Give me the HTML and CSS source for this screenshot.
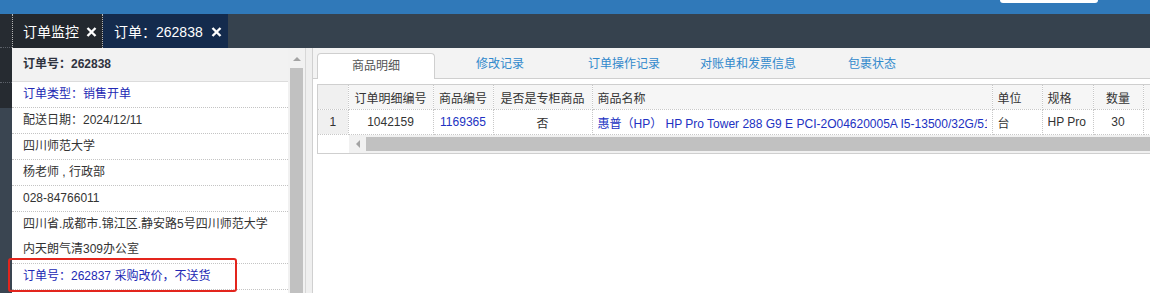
FILE: index.html
```html
<!DOCTYPE html>
<html lang="zh-CN">

<head>
    <meta charset="UTF-8">
    <meta name="viewport" content="width=device-width, initial-scale=1.0">
    <title>订单：262838</title>
    <link rel="stylesheet" href="styles.css">
</head>

<body>
    <div class="topbar">
        <div class="search"></div>
    </div>
    <div class="frame">
        <aside class="sidebar">
            <div class="side-item first"></div>
            <div class="side-item"></div>
            <div class="side-item last"></div>
        </aside>
        <div class="main">
            <div class="pagetabs">
                <div class="pagetab monitor">
                    <span>订单监控</span>
                    <svg class="close" viewBox="0 0 11 10"><path d="M1.5 1L9.5 9M9.5 1L1.5 9" /></svg>
                </div>
                <div class="pagetab current">
                    <span>订单：262838</span>
                    <svg class="close" viewBox="0 0 11 10"><path d="M1.5 1L9.5 9M9.5 1L1.5 9" /></svg>
                </div>
            </div>
            <div class="workspace">
                <div class="info-panel">
                    <div class="info-list">
                        <div class="info-head">订单号：262838</div>
                        <div class="info-row link">订单类型：销售开单</div>
                        <div class="info-row">配送日期：2024/12/11</div>
                        <div class="info-row">四川师范大学</div>
                        <div class="info-row">杨老师 , 行政部</div>
                        <div class="info-row">028-84766011</div>
                        <div class="info-row address">四川省.成都市.锦江区.静安路5号四川师范大学内天朗气清309办公室</div>
                        <div class="info-row link">订单号：262837 采购改价，不送货</div>
                        <div class="info-row"></div>
                    </div>
                    <div class="vscroll">
                        <div class="arrow-up"></div>
                        <div class="vthumb"></div>
                    </div>
                </div>
                <div class="splitter"></div>
                <div class="detail-panel">
                    <div class="detail-tabs">
                        <div class="dtab active">商品明细</div>
                        <div class="dtab">修改记录</div>
                        <div class="dtab">订单操作记录</div>
                        <div class="dtab">对账单和发票信息</div>
                        <div class="dtab">包裹状态</div>
                    </div>
                    <div class="grid">
                        <table>
                            <colgroup>
                                <col class="c-num">
                                <col class="c-id">
                                <col class="c-code">
                                <col class="c-flag">
                                <col class="c-name">
                                <col class="c-unit">
                                <col class="c-spec">
                                <col class="c-qty">
                                <col class="c-more">
                            </colgroup>
                            <thead>
                                <tr>
                                    <th class="num"></th>
                                    <th>订单明细编号</th>
                                    <th>商品编号</th>
                                    <th>是否是专柜商品</th>
                                    <th class="left">商品名称</th>
                                    <th class="left">单位</th>
                                    <th class="left">规格</th>
                                    <th>数量</th>
                                    <th></th>
                                </tr>
                            </thead>
                            <tbody>
                                <tr>
                                    <td class="num">1</td>
                                    <td>1042159</td>
                                    <td class="link">1169365</td>
                                    <td>否</td>
                                    <td class="left link"><div class="clip">惠普（HP） HP Pro Tower 288 G9 E PCI-2O04620005A I5-13500/32G/512G/集显/23.8英寸</div></td>
                                    <td class="left">台</td>
                                    <td class="left"><div class="clip">HP Pro Tower</div></td>
                                    <td>30</td>
                                    <td></td>
                                </tr>
                            </tbody>
                        </table>
                        <div class="hscroll">
                            <div class="hs-spacer"></div>
                            <div class="hs-btn"><span class="arrow-left"></span></div>
                            <div class="hs-track"><div class="hs-thumb"></div></div>
                        </div>
                    </div>
                </div>
            </div>
        </div>
        <div class="flag-box"></div>
    </div>
</body>

</html>
```

FILE: styles.css
```css
body {
    margin: 0;
    width: 1150px;
    height: 293px;
    overflow: hidden;
    background: #fff;
    font-family: "Liberation Sans", "Noto Sans CJK SC", sans-serif;
    font-size: 12px;
    color: #333;
}

.topbar {
    height: 14px;
    background: #3079b9;
    display: flex;
    justify-content: flex-end;
}

.search {
    width: 98px;
    height: 3px;
    margin-right: 52px;
    background: #fff;
    border-radius: 0 0 3px 3px;
}

.frame {
    position: relative;
    display: flex;
    height: 279px;
}

/* collapsed side menu */
.sidebar {
    width: 12px;
    flex: none;
    background: #3a4551;
}

.side-item {
    height: 34px;
    background: #262b31;
    border-bottom: 1px dotted #5b6068;
}

.side-item.first {
    height: 33px;
}

.side-item.last {
    height: 25px;
    border-bottom: none;
}

.main {
    flex: 1;
    min-width: 0;
    display: flex;
    flex-direction: column;
}

.pagetabs {
    height: 34px;
    flex: none;
    display: flex;
    background: #36424e;
}

.pagetab {
    display: flex;
    align-items: center;
    color: #fff;
    font-size: 14px;
}

.pagetab .close {
    width: 11px;
    height: 10px;
    margin-top: 1px;
    stroke: #fff;
    stroke-width: 2.4;
    fill: none;
}

.monitor {
    background: #23282e;
    border-left: 1px dotted #b5b5b5;
    border-right: 1px dotted #b5b5b5;
    padding: 0 5px 0 10px;
    gap: 7px;
}

.current {
    background: #142b4d;
    padding: 0 6px 0 11px;
    gap: 8px;
}

.workspace {
    flex: 1;
    display: flex;
    min-height: 0;
}

.info-panel {
    display: flex;
    flex: none;
}

.info-list {
    width: 276px;
    overflow: hidden;
    background: #fff;
}

.info-head {
    height: 33px;
    line-height: 33px;
    padding-left: 11px;
    background: #f2f2f2;
    border-bottom: 1px solid #dcdcdc;
    font-weight: bold;
    color: #2f3340;
}

.info-row {
    min-height: 25px;
    line-height: 25px;
    padding: 0 10px 0 11px;
    border-bottom: 1px dotted #c4c4c4;
}

.info-row.address {
    padding-bottom: 1px;
}

.info-row.link {
    color: #2228b4;
}

.vscroll {
    width: 17px;
    background: #f1f1f1;
    display: flex;
    flex-direction: column;
    align-items: center;
}

.arrow-up {
    margin-top: 9px;
    width: 0;
    height: 0;
    border-left: 4px solid transparent;
    border-right: 4px solid transparent;
    border-bottom: 4px solid #a3a3a3;
}

.vthumb {
    width: 13px;
    flex: 1;
    margin-top: 7px;
    background: #c1c1c1;
}

.splitter {
    width: 6px;
    flex: none;
    background: #efefef;
    border-left: 1px solid #d7d7d7;
}

.detail-panel {
    flex: 1;
    min-width: 0;
    overflow: hidden;
    border-left: 1px solid #d0d0d0;
}

.detail-tabs {
    height: 30px;
    display: flex;
    align-items: flex-end;
    gap: 6px;
    padding-left: 4px;
    background: #f3f3f3;
    border-bottom: 1px solid #cfcfcf;
}

.dtab {
    width: 118px;
    height: 26px;
    line-height: 24px;
    text-align: center;
    color: #3189cc;
    box-sizing: border-box;
    flex: none;
}

.dtab.active {
    background: #fff;
    color: #555;
    border: 1px solid #cfcfcf;
    border-bottom: none;
    border-radius: 4px 4px 0 0;
    margin-bottom: -1px;
}

.grid {
    width: 900px;
    margin: 5px 0 0 4px;
    border: 1px solid #cfcfcf;
}

table {
    border-collapse: collapse;
    table-layout: fixed;
    width: 880px;
}

.c-num { width: 30px; }
.c-id { width: 85px; }
.c-code { width: 60px; }
.c-flag { width: 99px; }
.c-name { width: 400px; }
.c-unit { width: 50px; }
.c-spec { width: 51px; }
.c-qty { width: 50px; }
.c-more { width: 55px; }

th,
td {
    height: 24px;
    padding: 0 5px;
    text-align: center;
    white-space: nowrap;
    overflow: hidden;
    border-right: 1px dotted #c8c8c8;
    border-bottom: 1px dotted #c8c8c8;
}

th {
    font-weight: normal;
    background: #f6f6f6;
}

th.left,
td.left {
    text-align: left;
}

td .clip {
    overflow: hidden;
    white-space: nowrap;
}

td.link {
    color: #2131c2;
}

td.num,
th.num {
    background: #f0f0f0;
}

.hscroll {
    display: flex;
    height: 18px;
}

.hs-spacer {
    width: 31px;
    background: #fff;
}

.hs-btn {
    width: 17px;
    background: #f1f1f1;
    display: flex;
    align-items: center;
    justify-content: center;
}

.arrow-left {
    width: 0;
    height: 0;
    border-top: 4px solid transparent;
    border-bottom: 4px solid transparent;
    border-right: 4px solid #a3a3a3;
}

.hs-track {
    flex: 1;
    background: #f1f1f1;
    padding: 2px 0;
}

.hs-thumb {
    height: 14px;
    background: #c1c1c1;
}

/* red annotation around the linked order */
.flag-box {
    position: absolute;
    left: 8px;
    top: 244px;
    width: 229px;
    height: 34px;
    box-sizing: border-box;
    border: 2px solid #e3251d;
    border-radius: 3px;
}
```
